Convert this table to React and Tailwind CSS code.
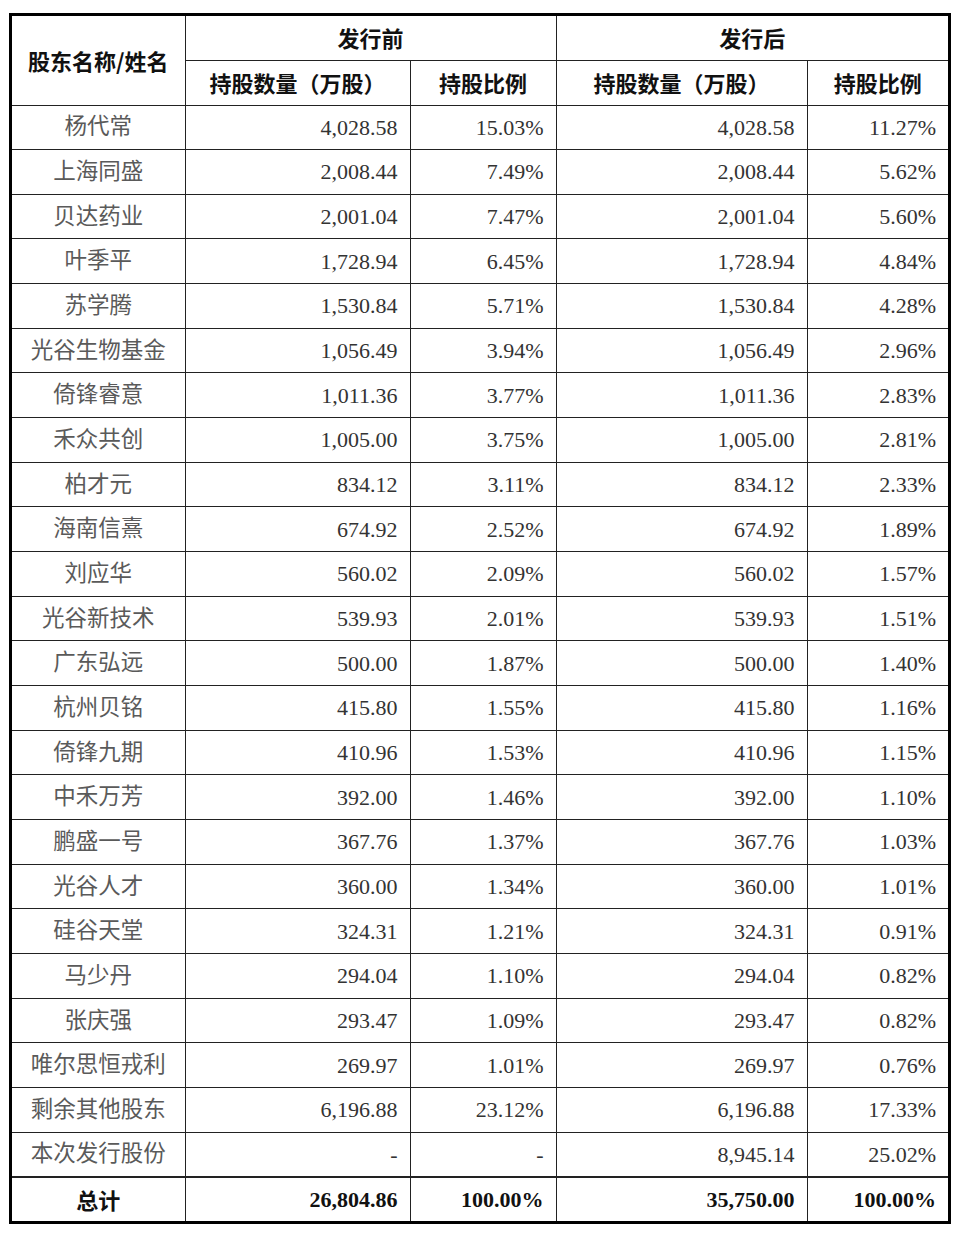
const rows = [
  ['杨代常', '4,028.58', '15.03%', '4,028.58', '11.27%'],
  ['上海同盛', '2,008.44', '7.49%', '2,008.44', '5.62%'],
  ['贝达药业', '2,001.04', '7.47%', '2,001.04', '5.60%'],
  ['叶季平', '1,728.94', '6.45%', '1,728.94', '4.84%'],
  ['苏学腾', '1,530.84', '5.71%', '1,530.84', '4.28%'],
  ['光谷生物基金', '1,056.49', '3.94%', '1,056.49', '2.96%'],
  ['倚锋睿意', '1,011.36', '3.77%', '1,011.36', '2.83%'],
  ['禾众共创', '1,005.00', '3.75%', '1,005.00', '2.81%'],
  ['柏才元', '834.12', '3.11%', '834.12', '2.33%'],
  ['海南信熹', '674.92', '2.52%', '674.92', '1.89%'],
  ['刘应华', '560.02', '2.09%', '560.02', '1.57%'],
  ['光谷新技术', '539.93', '2.01%', '539.93', '1.51%'],
  ['广东弘远', '500.00', '1.87%', '500.00', '1.40%'],
  ['杭州贝铭', '415.80', '1.55%', '415.80', '1.16%'],
  ['倚锋九期', '410.96', '1.53%', '410.96', '1.15%'],
  ['中禾万芳', '392.00', '1.46%', '392.00', '1.10%'],
  ['鹏盛一号', '367.76', '1.37%', '367.76', '1.03%'],
  ['光谷人才', '360.00', '1.34%', '360.00', '1.01%'],
  ['硅谷天堂', '324.31', '1.21%', '324.31', '0.91%'],
  ['马少丹', '294.04', '1.10%', '294.04', '0.82%'],
  ['张庆强', '293.47', '1.09%', '293.47', '0.82%'],
  ['唯尔思恒戎利', '269.97', '1.01%', '269.97', '0.76%'],
  ['剩余其他股东', '6,196.88', '23.12%', '6,196.88', '17.33%'],
  ['本次发行股份', '-', '-', '8,945.14', '25.02%'],
]

const sans = "font-['Noto_Sans_CJK_SC',sans-serif]"
const serif = "font-['Liberation_Serif','Noto_Sans_CJK_SC',serif]"

const App = () => {
  return (
    <div className="min-h-[1244px] bg-white pl-[9px] pt-[13px]">
      <div className="w-[942px] border-[3px] border-black">
        <table className="w-full table-fixed border-collapse border-hidden">
          <colgroup>
            <col className="w-[173px]" />
            <col className="w-[225px]" />
            <col className="w-[146px]" />
            <col className="w-[251px]" />
            <col className="w-[141px]" />
          </colgroup>
          <thead className={`${sans} text-[22px] font-bold text-[#111]`}>
            <tr className="h-[44px]">
              <th rowSpan={2} className="border border-[#222] text-center align-middle">
                股东名称/姓名
              </th>
              <th colSpan={2} className="border border-[#222] text-center">
                发行前
              </th>
              <th colSpan={2} className="border border-[#222] text-center">
                发行后
              </th>
            </tr>
            <tr className="h-[45px]">
              <th className="border border-[#222] text-center">持股数量（万股）</th>
              <th className="border border-[#222] text-center">持股比例</th>
              <th className="border border-[#222] text-center">持股数量（万股）</th>
              <th className="border border-[#222] text-center">持股比例</th>
            </tr>
          </thead>
          <tbody className="text-[22px]">
            {rows.map((r) => (
              <tr key={r[0]} className="h-[44.67px]">
                <td className={`border border-[#222] text-center text-[22.5px] text-[#5a5a5a] ${serif}`}>
                  {r[0]}
                </td>
                {r.slice(1).map((v, i) => (
                  <td
                    key={i}
                    className={`border border-[#222] pr-[12px] text-right text-[#333] ${serif}`}
                  >
                    {v}
                  </td>
                ))}
              </tr>
            ))}
            <tr className="h-[44px]">
              <td className={`border border-t-2 border-[#222] text-center text-[22px] font-bold text-[#111] ${sans}`}>
                总计
              </td>
              {['26,804.86', '100.00%', '35,750.00', '100.00%'].map((v, i) => (
                <td
                  key={i}
                  className={`border border-t-2 border-[#222] pr-[12px] text-right font-bold text-[#111] ${serif}`}
                >
                  {v}
                </td>
              ))}
            </tr>
          </tbody>
        </table>
      </div>
    </div>
  )
}

export default App
